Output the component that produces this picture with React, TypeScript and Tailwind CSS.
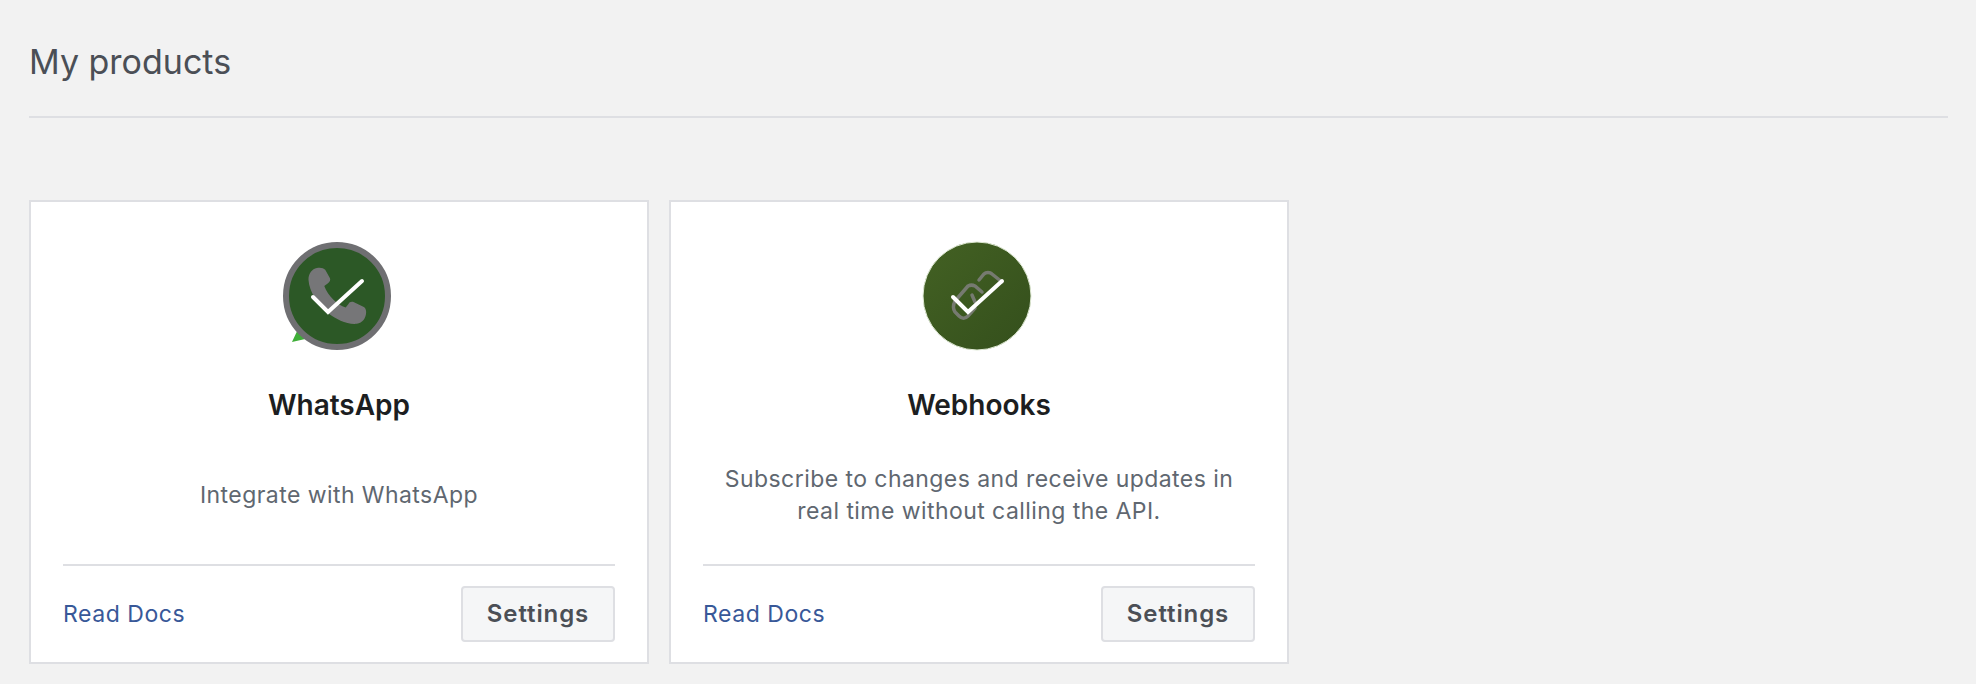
const font = "font-['Inter','Noto_Sans',sans-serif]";

function WhatsAppIcon() {
  return (
    <svg width="112" height="112" viewBox="0 0 112 112">
      <path d="M18 86 L11 101 L33 96 Z" fill="#3fae38" />
      <circle cx="56" cy="55" r="51" fill="#2c5826" stroke="#6f6f72" strokeWidth="6" />
      <g transform="translate(0.5 0) scale(0.93 0.9)">
        <path
          d="M38 30c-5 1-9 6-9 13 1 14 10 27 21 37 9 7 20 13 31 12 6-1 10-6 10-13 0-3-1-5-3-6l-10-5c-3-1-5 0-6 2l-3 4c-9-3-19-13-23-24l4-3c2-2 3-4 2-6l-5-9c-2-2-5-3-9-2z"
          fill="#767678"
        />
      </g>
      <path d="M32 56 L47 71 L81 40" fill="none" stroke="#fff" strokeWidth="4" strokeLinecap="round" strokeLinejoin="miter" />
    </svg>
  );
}

function WebhooksIcon() {
  return (
    <svg width="112" height="112" viewBox="0 0 112 112">
      <defs>
        <linearGradient id="hookBg" x1="0" y1="0" x2="1" y2="1">
          <stop offset="0" stopColor="#436123" />
          <stop offset="1" stopColor="#344f1c" />
        </linearGradient>
      </defs>
      <circle cx="56" cy="55" r="54" fill="url(#hookBg)" stroke="#dfe9d4" strokeWidth="1" />
      <g fill="none" stroke="#767a70" strokeWidth="3.5" strokeLinecap="round">
        <path d="M58 39 L63 33 C65 31 69 31 71 33 L81 41" />
        <path d="M61 51 L54 45 C52 44 49 44 47 45 L34 60 C32 64 32 68 34 71 L38 75 C41 78 44 78 47 75 L54 67" />
        <path d="M51 54 L54 61" />
      </g>
      <path d="M32 56 L47 71 L81 40" fill="none" stroke="#fff" strokeWidth="4" strokeLinecap="round" strokeLinejoin="miter" />
    </svg>
  );
}

function ProductCard({ icon, title, desc }: { icon: React.ReactNode; title: string; desc: React.ReactNode }) {
  return (
    <div className="w-[620px] h-[464px] bg-white border-2 border-[#dedfe3] flex flex-col px-[32px]">
      <div className="flex justify-center pt-[39px] pr-[4px]">{icon}</div>
      <h3 className="mt-[34px] text-center text-[28px] leading-[36px] font-semibold text-[#1c1e21]">{title}</h3>
      <div className="h-[134px] mt-[5px] flex items-center justify-center text-center text-[23px] leading-[32px] tracking-[0.44px] text-[#606770]">
        <p>{desc}</p>
      </div>
      <div className="border-t-2 border-[#dedfe3] mt-[2px] flex items-center justify-between pt-[20px]">
        <a href="#" className="text-[23px] tracking-[0.55px] text-[#385898]">Read Docs</a>
        <button className="w-[154px] h-[56px] rounded-[4px] border-2 border-[#dedfe3] bg-[#f5f6f7] text-[24px] font-semibold tracking-[0.9px] text-[#4b4f56]">
          Settings
        </button>
      </div>
    </div>
  );
}

export default function App() {
  return (
    <div className={`${font} w-[1976px] h-[684px] overflow-hidden bg-[#f2f2f2] pl-[29px] pr-[28px]`}>
      <div className="h-[118px] border-b-2 border-[#dedfe3] pt-[38px]">
        <h2 className="text-[34px] leading-[48px] font-normal text-[#4b4f56]">My products</h2>
      </div>
      <div className="flex gap-[20px] mt-[82px]">
        <ProductCard icon={<WhatsAppIcon />} title="WhatsApp" desc="Integrate with WhatsApp" />
        <ProductCard
          icon={<WebhooksIcon />}
          title="Webhooks"
          desc={<>Subscribe to changes and receive updates in<br />real time without calling the API.</>}
        />
      </div>
    </div>
  );
}
